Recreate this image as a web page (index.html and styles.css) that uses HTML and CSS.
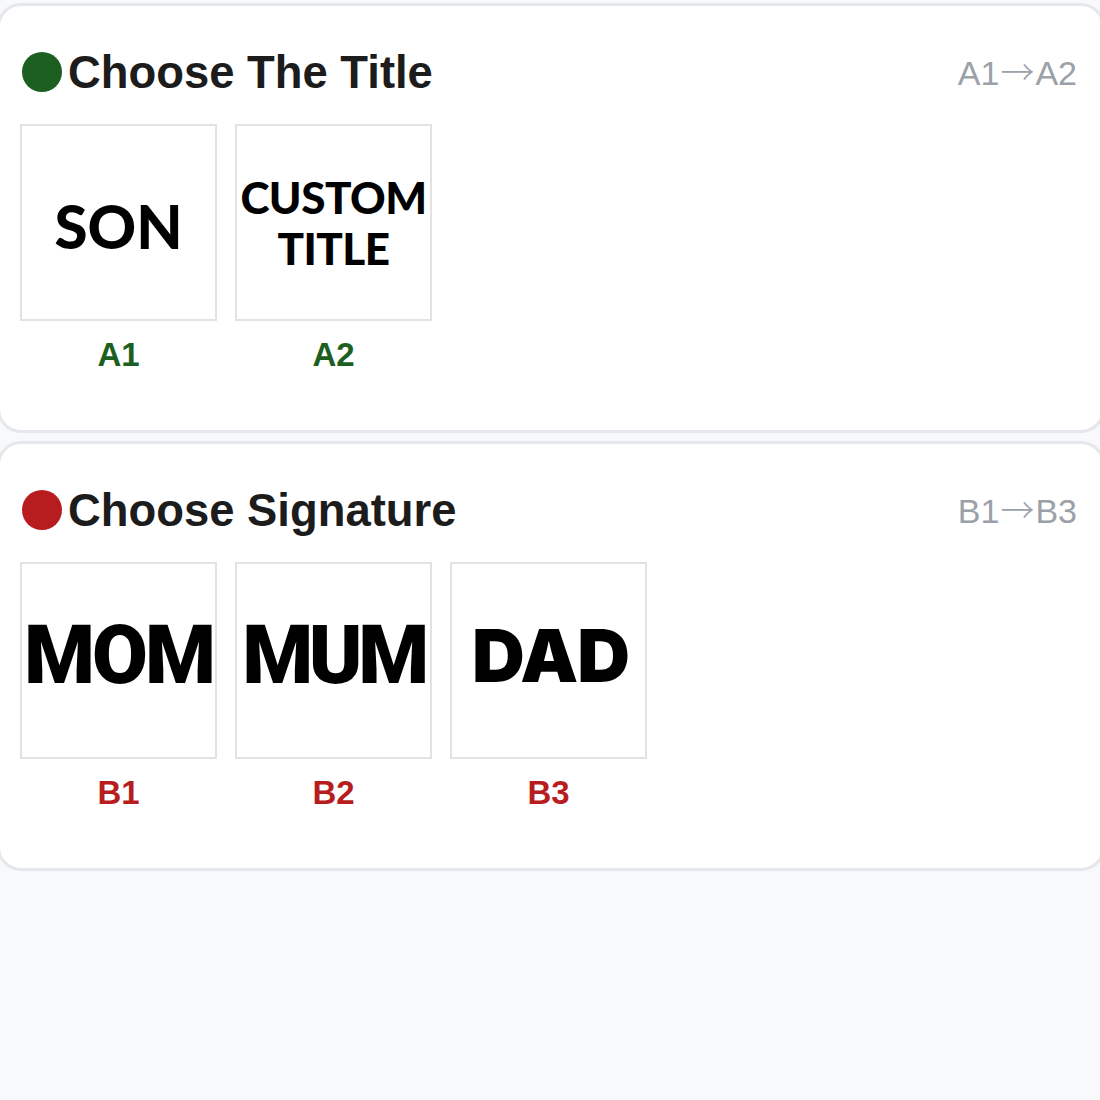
FILE: index.html
```html
<!DOCTYPE html>
<html lang="en">
<head>
<meta charset="utf-8">
<title>Choose options</title>
<link rel="stylesheet" href="styles.css">
</head>
<body>
<main class="stack">
  <section class="card">
    <header class="card-head">
      <span class="dot dot-green"></span>
      <h2 class="card-title">Choose The Title</h2>
      <span class="range">A1<span class="arrow">→</span>A2</span>
    </header>
    <div class="options">
      <div class="option">
        <div class="tile"><span class="word word-son">SON</span></div>
        <div class="code code-green">A1</div>
      </div>
      <div class="option">
        <div class="tile"><span class="word word-custom">CUSTOM<br>TITLE</span></div>
        <div class="code code-green">A2</div>
      </div>
    </div>
  </section>

  <section class="card">
    <header class="card-head">
      <span class="dot dot-red"></span>
      <h2 class="card-title">Choose Signature</h2>
      <span class="range">B1<span class="arrow">→</span>B3</span>
    </header>
    <div class="options">
      <div class="option">
        <div class="tile tile-sig"><span class="word word-mom">MOM</span></div>
        <div class="code code-red">B1</div>
      </div>
      <div class="option">
        <div class="tile tile-sig"><span class="word word-mum">MUM</span></div>
        <div class="code code-red">B2</div>
      </div>
      <div class="option">
        <div class="tile tile-sig"><span class="word word-dad">DAD</span></div>
        <div class="code code-red">B3</div>
      </div>
    </div>
  </section>
</main>
</body>
</html>
```

FILE: styles.css
```css
html, body {
  margin: 0;
  background: #f8f9fa;
}

body {
  font-family: "Liberation Sans", Arial, sans-serif;
  overflow: hidden;
}

.stack {
  display: flex;
  flex-direction: column;
  gap: 8px;
  padding-top: 3px;
  margin-left: -3px;
  width: 1108px;
}

.card {
  background: #fff;
  border: 3px solid #e4e7eb;
  border-radius: 24px;
  padding: 46px 25px 55px 20px;
}

.card-head {
  display: flex;
  align-items: center;
  height: 40px;
}

.dot {
  width: 40px;
  height: 40px;
  margin-left: 2px;
  border-radius: 50%;
  flex: none;
}

.dot-green { background: #1d5e21; }
.dot-red { background: #b71d1f; }

.card-title {
  margin: 0 0 0 6px;
  font-size: 45.4px;
  line-height: 40px;
  font-weight: 700;
  color: #1c1c1c;
  position: relative;
  top: 1px;
  flex: 1;
}

.range {
  font-size: 34px;
  line-height: 40px;
  color: #9ba1a9;
  white-space: nowrap;
}

.arrow {
  font-family: "Noto Sans CJK SC", sans-serif;
  font-weight: 300;
  font-size: 34px;
  margin: 0 1px;
}

.options {
  display: flex;
  gap: 18px;
  margin-top: 32px;
}

.option {
  display: flex;
  flex-direction: column;
  align-items: center;
  width: 197px;
}

.tile {
  box-sizing: border-box;
  width: 197px;
  height: 197px;
  border: 2px solid #e2e2e2;
  background: #fff;
  display: flex;
  align-items: center;
  justify-content: center;
  color: #000;
  overflow: hidden;
}

.word {
  display: block;
  text-align: center;
  white-space: nowrap;
}

.word-son {
  font-family: Lato, sans-serif;
  font-weight: 900;
  font-size: 60px;
  line-height: 1;
  margin-top: 6px;
}

.word-custom {
  font-family: Lato, sans-serif;
  font-weight: 900;
  font-size: 44px;
  line-height: 51px;
  letter-spacing: -0.5px;
}

.tile-sig .word {
  font-family: Roboto, sans-serif;
  font-weight: 900;
  line-height: 1;
  margin-top: -10px;
}

.word-mom {
  font-size: 81px;
  letter-spacing: -3px;
}

.word-mum {
  font-size: 81px;
  letter-spacing: -4.5px;
}

.tile-sig .word-dad {
  font-family: Inter, sans-serif;
  font-size: 73px;
  letter-spacing: -1px;
  padding-left: 4px;
}

.code {
  margin-top: 14px;
  font-size: 33px;
  line-height: 40px;
  font-weight: 700;
}

.code-green { color: #1d5e21; }
.code-red { color: #b71d1f; }
```
